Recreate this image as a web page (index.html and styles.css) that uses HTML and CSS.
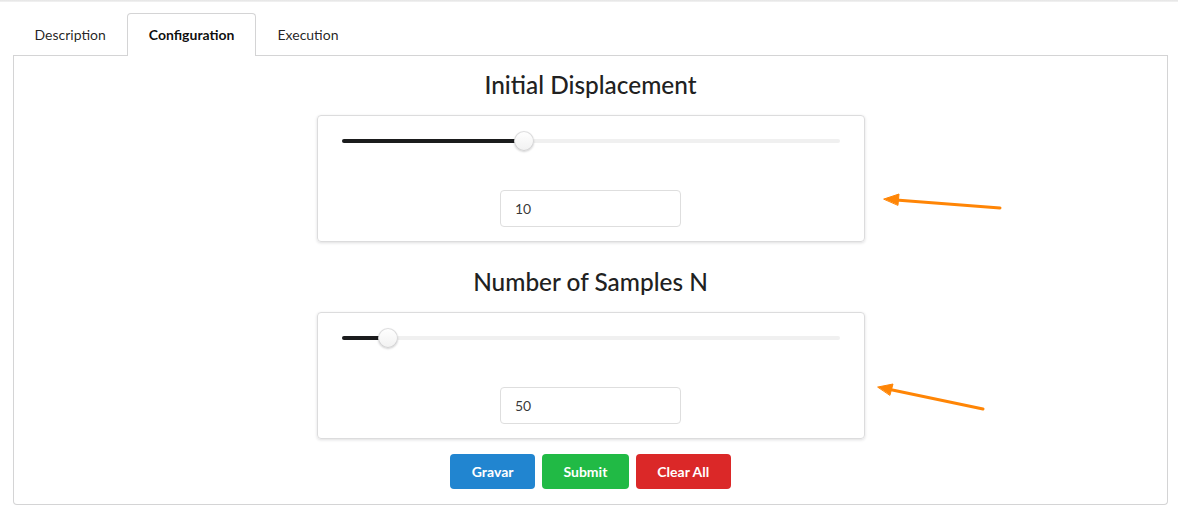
FILE: index.html
```html
<!DOCTYPE html>
<html lang="en">
<head>
<meta charset="utf-8">
<title>Configuration</title>
<link rel="stylesheet" href="styles.css">
</head>
<body>
<div class="topbar"></div>
<main class="page">
  <nav class="tabs">
    <a class="tab">Description</a>
    <a class="tab active">Configuration</a>
    <a class="tab">Execution</a>
  </nav>
  <section class="segment">
    <h2 class="heading">Initial Displacement</h2>
    <div class="card">
      <div class="range">
        <div class="track"><div class="fill" style="width: 36.7%"></div><div class="thumb" style="left: 36.7%"></div></div>
      </div>
      <input class="field" type="text" value="10">
    </div>
    <h2 class="heading heading-next">Number of Samples N</h2>
    <div class="card">
      <div class="range">
        <div class="track"><div class="fill" style="width: 9.4%"></div><div class="thumb" style="left: 9.4%"></div></div>
      </div>
      <input class="field" type="text" value="50">
    </div>
    <div class="actions">
      <button class="btn btn-blue">Gravar</button>
      <button class="btn btn-green">Submit</button>
      <button class="btn btn-red">Clear All</button>
    </div>
  </section>
</main>
<svg class="annotations" width="1178" height="513" viewBox="0 0 1178 513" aria-hidden="true">
  <g stroke="#ff8505" stroke-width="3" stroke-linecap="round" fill="#ff8505">
    <line x1="1000" y1="208" x2="896" y2="200"/>
    <polygon points="884,199 899,194 898,205" stroke-width="1" stroke-linejoin="round"/>
    <line x1="983" y1="409" x2="890" y2="389.5"/>
    <polygon points="878,387 893,384 890,395" stroke-width="1" stroke-linejoin="round"/>
  </g>
</svg>
</body>
</html>
```

FILE: styles.css
```css
* { box-sizing: border-box; }

html, body {
  margin: 0;
  padding: 0;
  background: #fff;
}

body {
  font-family: Lato, "Open Sans", "Liberation Sans", sans-serif;
  font-size: 14px;
  color: rgba(0, 0, 0, 0.87);
  width: 1178px;
  height: 513px;
  overflow: hidden;
  position: relative;
}

.topbar {
  height: 2px;
  background: linear-gradient(#e4e4e4, #f3f3f3);
}

.page {
  padding: 11px 10px 0 13px;
}

.tabs {
  display: flex;
  border-bottom: 1px solid #d4d4d5;
}

.tab {
  display: block;
  padding: 14px 20.5px 14px;
  line-height: 14px;
  border: 1px solid transparent;
  border-bottom: none;
  border-radius: 4px 4px 0 0;
  color: rgba(0, 0, 0, 0.87);
  margin-bottom: -1px;
  cursor: pointer;
}

.tab.active {
  background: #fff;
  border-color: #d4d4d5;
  font-weight: 700;
  color: rgba(0, 0, 0, 0.95);
}

.segment {
  border: 1px solid #d4d4d5;
  border-top: none;
  border-radius: 0 0 4px 4px;
  padding: 14px 0 14px;
  display: flex;
  flex-direction: column;
  align-items: center;
  height: 449px;
}

.heading {
  margin: 0;
  font-size: 24.4px;
  line-height: 30px;
  font-weight: 500;
  color: #212121;
}

.heading-next {
  margin-top: 25px;
}

.card {
  margin-top: 15px;
  width: 548px;
  height: 127px;
  border: 1px solid #dcdcdd;
  border-radius: 4px;
  box-shadow: 0 1px 3px rgba(34, 36, 38, 0.15);
  display: flex;
  flex-direction: column;
  align-items: center;
  padding: 0 24px 14px;
}

.range {
  width: 100%;
  height: 50px;
  display: flex;
  align-items: center;
}

.track {
  position: relative;
  width: 100%;
  height: 4px;
  border-radius: 2px;
  background: #f0f0f0;
}

.fill {
  height: 4px;
  border-radius: 2px;
  background: #1b1c1d;
}

.thumb {
  position: absolute;
  top: 50%;
  width: 20px;
  height: 20px;
  margin: -10px 0 0 -10px;
  border-radius: 50%;
  background: linear-gradient(#fff, #f1f1f1);
  box-shadow: 0 1px 2px rgba(34, 36, 38, 0.2), inset 0 0 0 1px rgba(34, 36, 38, 0.15);
}

.field {
  margin-top: 24px;
  width: 181px;
  height: 37px;
  border: 1px solid #dedede;
  border-radius: 4px;
  padding: 0 14px;
  font-family: inherit;
  font-size: 14px;
  color: rgba(0, 0, 0, 0.8);
  outline: none;
}

.actions {
  margin-top: 15px;
  display: flex;
  gap: 7px;
}

.btn {
  height: 35px;
  padding: 0 21.5px;
  border: none;
  border-radius: 4px;
  font-family: inherit;
  font-size: 14px;
  font-weight: 700;
  color: #fff;
  cursor: pointer;
}

.btn-blue { background: #2185d0; }
.btn-green { background: #21ba45; }
.btn-red { background: #db2828; }

.annotations {
  position: absolute;
  left: 0;
  top: 0;
  pointer-events: none;
}
```
